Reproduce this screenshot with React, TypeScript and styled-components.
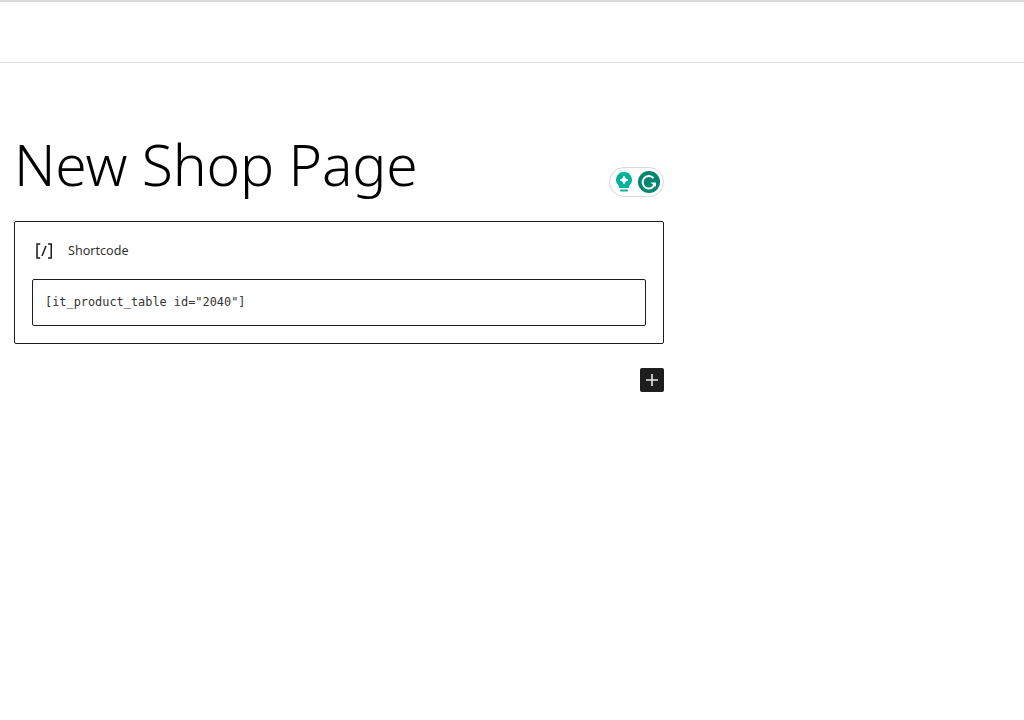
import React from 'react';
import styled, { createGlobalStyle } from 'styled-components';

const GlobalStyle = createGlobalStyle`
	html, body {
		margin: 0;
		padding: 0;
		background: #fff;
	}
`;

const Page = styled.div`
	width: 1024px;
	height: 720px;
	overflow: hidden;
	border-top: 2px solid #dcdcde;
	box-sizing: border-box;
	font-family: 'Noto Sans', 'Open Sans', sans-serif;
	color: #1e1e1e;
`;

const TopBar = styled.header`
	height: 60px;
	border-bottom: 1px solid #e0e0e0;
`;

const Editor = styled.main`
	width: 650px;
	margin-left: 14px;
	padding-top: 62px;
`;

const TitleRow = styled.div`
	position: relative;
	height: 96px;
`;

const Title = styled.h1`
	margin: 0;
	font-family: 'Noto Sans', 'Open Sans', sans-serif;
	font-size: 57px;
	font-weight: 350;
	letter-spacing: -0.2px;
	line-height: 78px;
	color: #000;
`;

const GrammarlyBadge = styled.div`
	position: absolute;
	top: 42px;
	right: 0;
	width: 55px;
	height: 30px;
	box-sizing: border-box;
	display: flex;
	align-items: center;
	justify-content: space-between;
	padding: 0 3px 0 5px;
	background: #fff;
	border: 1px solid #d5d8de;
	border-radius: 15px;
`;

const ShortcodeBlock = styled.section`
	box-sizing: border-box;
	height: 123px;
	border: 1px solid #1e1e1e;
	border-radius: 2px;
	padding: 17px;
`;

const BlockLabel = styled.div`
	display: flex;
	align-items: center;
	height: 24px;
	margin-bottom: 16px;
	font-size: 12.6px;
	line-height: 22px;
	color: #333;
`;

const LabelIcon = styled.svg`
	width: 24px;
	height: 24px;
	margin-right: 12px;
`;

const CodeInput = styled.div`
	box-sizing: border-box;
	height: 47px;
	border: 1px solid #1e1e1e;
	border-radius: 2px;
	padding: 0 12px 2px;
	display: flex;
	align-items: center;
	font-family: 'DejaVu Sans Mono', 'Liberation Mono', monospace;
	font-size: 11.9px;
	color: #333;
`;

const AppenderRow = styled.div`
	display: flex;
	justify-content: flex-end;
	margin-top: 24px;
`;

const AddButton = styled.button`
	width: 24px;
	height: 24px;
	padding: 0;
	border: none;
	border-radius: 2px;
	background: #1e1e1e;
	display: flex;
	align-items: center;
	justify-content: center;
`;

export default function App(): React.ReactNode {
	return (
		<>
			<GlobalStyle />
			<Page>
				<TopBar />
				<Editor>
					<TitleRow>
						<Title>New Shop Page</Title>
						<GrammarlyBadge>
							<svg width="18" height="22" viewBox="0 0 18 22">
								<path d="M9 1a8 8 0 0 0-5 14.2V17h10v-1.8A8 8 0 0 0 9 1z" fill="#00b39b" />
								<path d="M9 5 10.2 7.8 13 9 10.2 10.2 9 13 7.8 10.2 5 9 7.8 7.8z" fill="#fff" stroke="#fff" strokeWidth="1" strokeLinejoin="round" />
								<rect x="5" y="18.6" width="8" height="2" rx="1" fill="#00b39b" />
							</svg>
							<svg width="22" height="22" viewBox="0 0 22 22">
								<circle cx="11" cy="11" r="11" fill="#00856f" />
								<path d="M15.6 7.2A6.2 6.2 0 1 0 16.9 12.6" fill="none" stroke="#fff" strokeWidth="2" />
								<path d="M12.4 11.4H18V16z" fill="#fff" />
							</svg>
						</GrammarlyBadge>
					</TitleRow>
					<ShortcodeBlock>
						<BlockLabel>
							<LabelIcon viewBox="0 0 24 24">
								<path d="M16 4.2v1.5h2.5v12.5H16v1.5h4V4.2h-4zM4.2 19.8h4v-1.5H5.8V5.8h2.5V4.2h-4l-.1 15.6zm5.1-3.1l1.4.6 4-10-1.4-.6-4 10z" fill="#1e1e1e" />
							</LabelIcon>
							Shortcode
						</BlockLabel>
						<CodeInput>[it_product_table id="2040"]</CodeInput>
					</ShortcodeBlock>
					<AppenderRow>
						<AddButton aria-label="Add block">
							<svg width="24" height="24" viewBox="0 0 24 24">
								<path d="M18 11.2h-5.2V6h-1.6v5.2H6v1.6h5.2V18h1.6v-5.2H18z" fill="#e8e8e8" />
							</svg>
						</AddButton>
					</AppenderRow>
				</Editor>
			</Page>
		</>
	);
}
